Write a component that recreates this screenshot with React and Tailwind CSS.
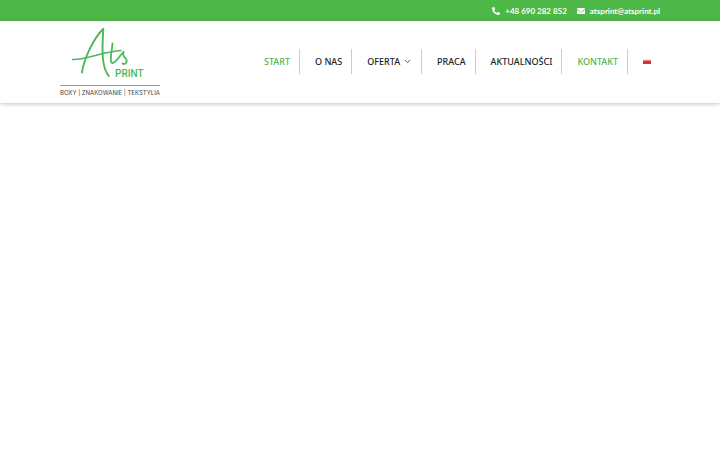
import React from 'react';
import { FaPhoneAlt, FaEnvelope } from 'react-icons/fa';
import { FiChevronDown } from 'react-icons/fi';

const navItems = [
  { href: '#start', label: 'START', green: true },
  { href: '#o-nas', label: 'O NAS' },
  { href: '#oferta', label: 'OFERTA', hasMenu: true },
  { href: '#praca', label: 'PRACA' },
  { href: '#aktualnosci', label: 'AKTUALNOŚCI' },
  { href: '#kontakt', label: 'KONTAKT', green: true },
];

function TopBar() {
  return (
    <div className="bg-[#4db748] text-white">
      <div className="mx-auto flex h-[21px] max-w-[1200px] items-center justify-end gap-[10px] px-[60px] font-['Lato',sans-serif] text-[8px] leading-[12px] font-bold">
        <a href="tel:+48690282852" className="flex items-center gap-[5px]">
          <FaPhoneAlt className="size-[8px]" />
          +48 690 282 852
        </a>
        <a href="mailto:atsprint@atsprint.pl" className="flex items-center gap-[5px]">
          <FaEnvelope className="size-[8px]" />
          atsprint@atsprint.pl
        </a>
      </div>
    </div>
  );
}

function Logo() {
  return (
    <a href="#start" className="flex w-[100px] shrink-0 flex-col" aria-label="Ats Print">
      <svg viewBox="60 26 100 54" className="h-[54px] w-full" fill="none" stroke="#4db85a" strokeLinecap="round" strokeLinejoin="round">
        <path strokeWidth="1.9" d="M82 72.500C84 58 94 38 103.300 28.800C102.500 45 100.500 66 108.800 76" />
        <path strokeWidth="1.4" d="M72.500 59.500C82 60 94 55.500 104 53.200S116 51 121 50.500" />
        <path strokeWidth="1.8" d="M112.500 43.500C112 50 109 63 112.500 63C116 63 119.500 56 123.500 51.800C121.500 56.500 126.500 57.500 126.800 60.800C126.800 64 124 64.500 122.500 63.500" />
        <text x="115" y="76.500" fill="#4db85a" stroke="none" className="font-['Roboto',sans-serif] text-[10px] font-medium">PRINT</text>
      </svg>
      <span className="mt-[5px] flex justify-center border-t border-[#999] pt-[2px] font-['Inter',sans-serif] text-[6px] leading-[9px] whitespace-nowrap text-[#444]">
        BOXY | ZNAKOWANIE | TEKSTYLIA
      </span>
    </a>
  );
}

function Header() {
  return (
    <header className="bg-white shadow-[0_1px_4px_rgba(0,0,0,0.25)]">
      <div className="mx-auto flex max-w-[1200px] items-center justify-between px-[60px] pt-[5px] pb-[6px]">
        <Logo />
        <nav className="flex items-center text-[9px] leading-[25px] font-medium">
          {navItems.map((item) => (
            <a
              key={item.href}
              href={item.href}
              className={`flex items-center border-r border-[#ccc] pr-[9px] pl-[15px] whitespace-nowrap ${
                item.green ? 'text-[#4db748]' : 'text-[#222]'
              }`}
            >
              {item.label}
              {item.hasMenu && <FiChevronDown className="ml-[3px] size-[9px]" />}
            </a>
          ))}
          <a href="#pl" aria-label="Polski" className="pr-[9px] pl-[15px]">
            <svg viewBox="0 0 8 5" className="h-[5px] w-[8px]">
              <rect width="8" height="5" fill="#eee" />
              <rect y="1" width="8" height="1" fill="#ee8087" />
              <rect y="2" width="8" height="3" fill="#e0303a" />
            </svg>
          </a>
        </nav>
      </div>
    </header>
  );
}

function App() {
  return (
    <div className="min-h-screen bg-white font-['Noto_Sans',sans-serif]">
      <TopBar />
      <Header />
      <main />
    </div>
  );
}

export default App;
